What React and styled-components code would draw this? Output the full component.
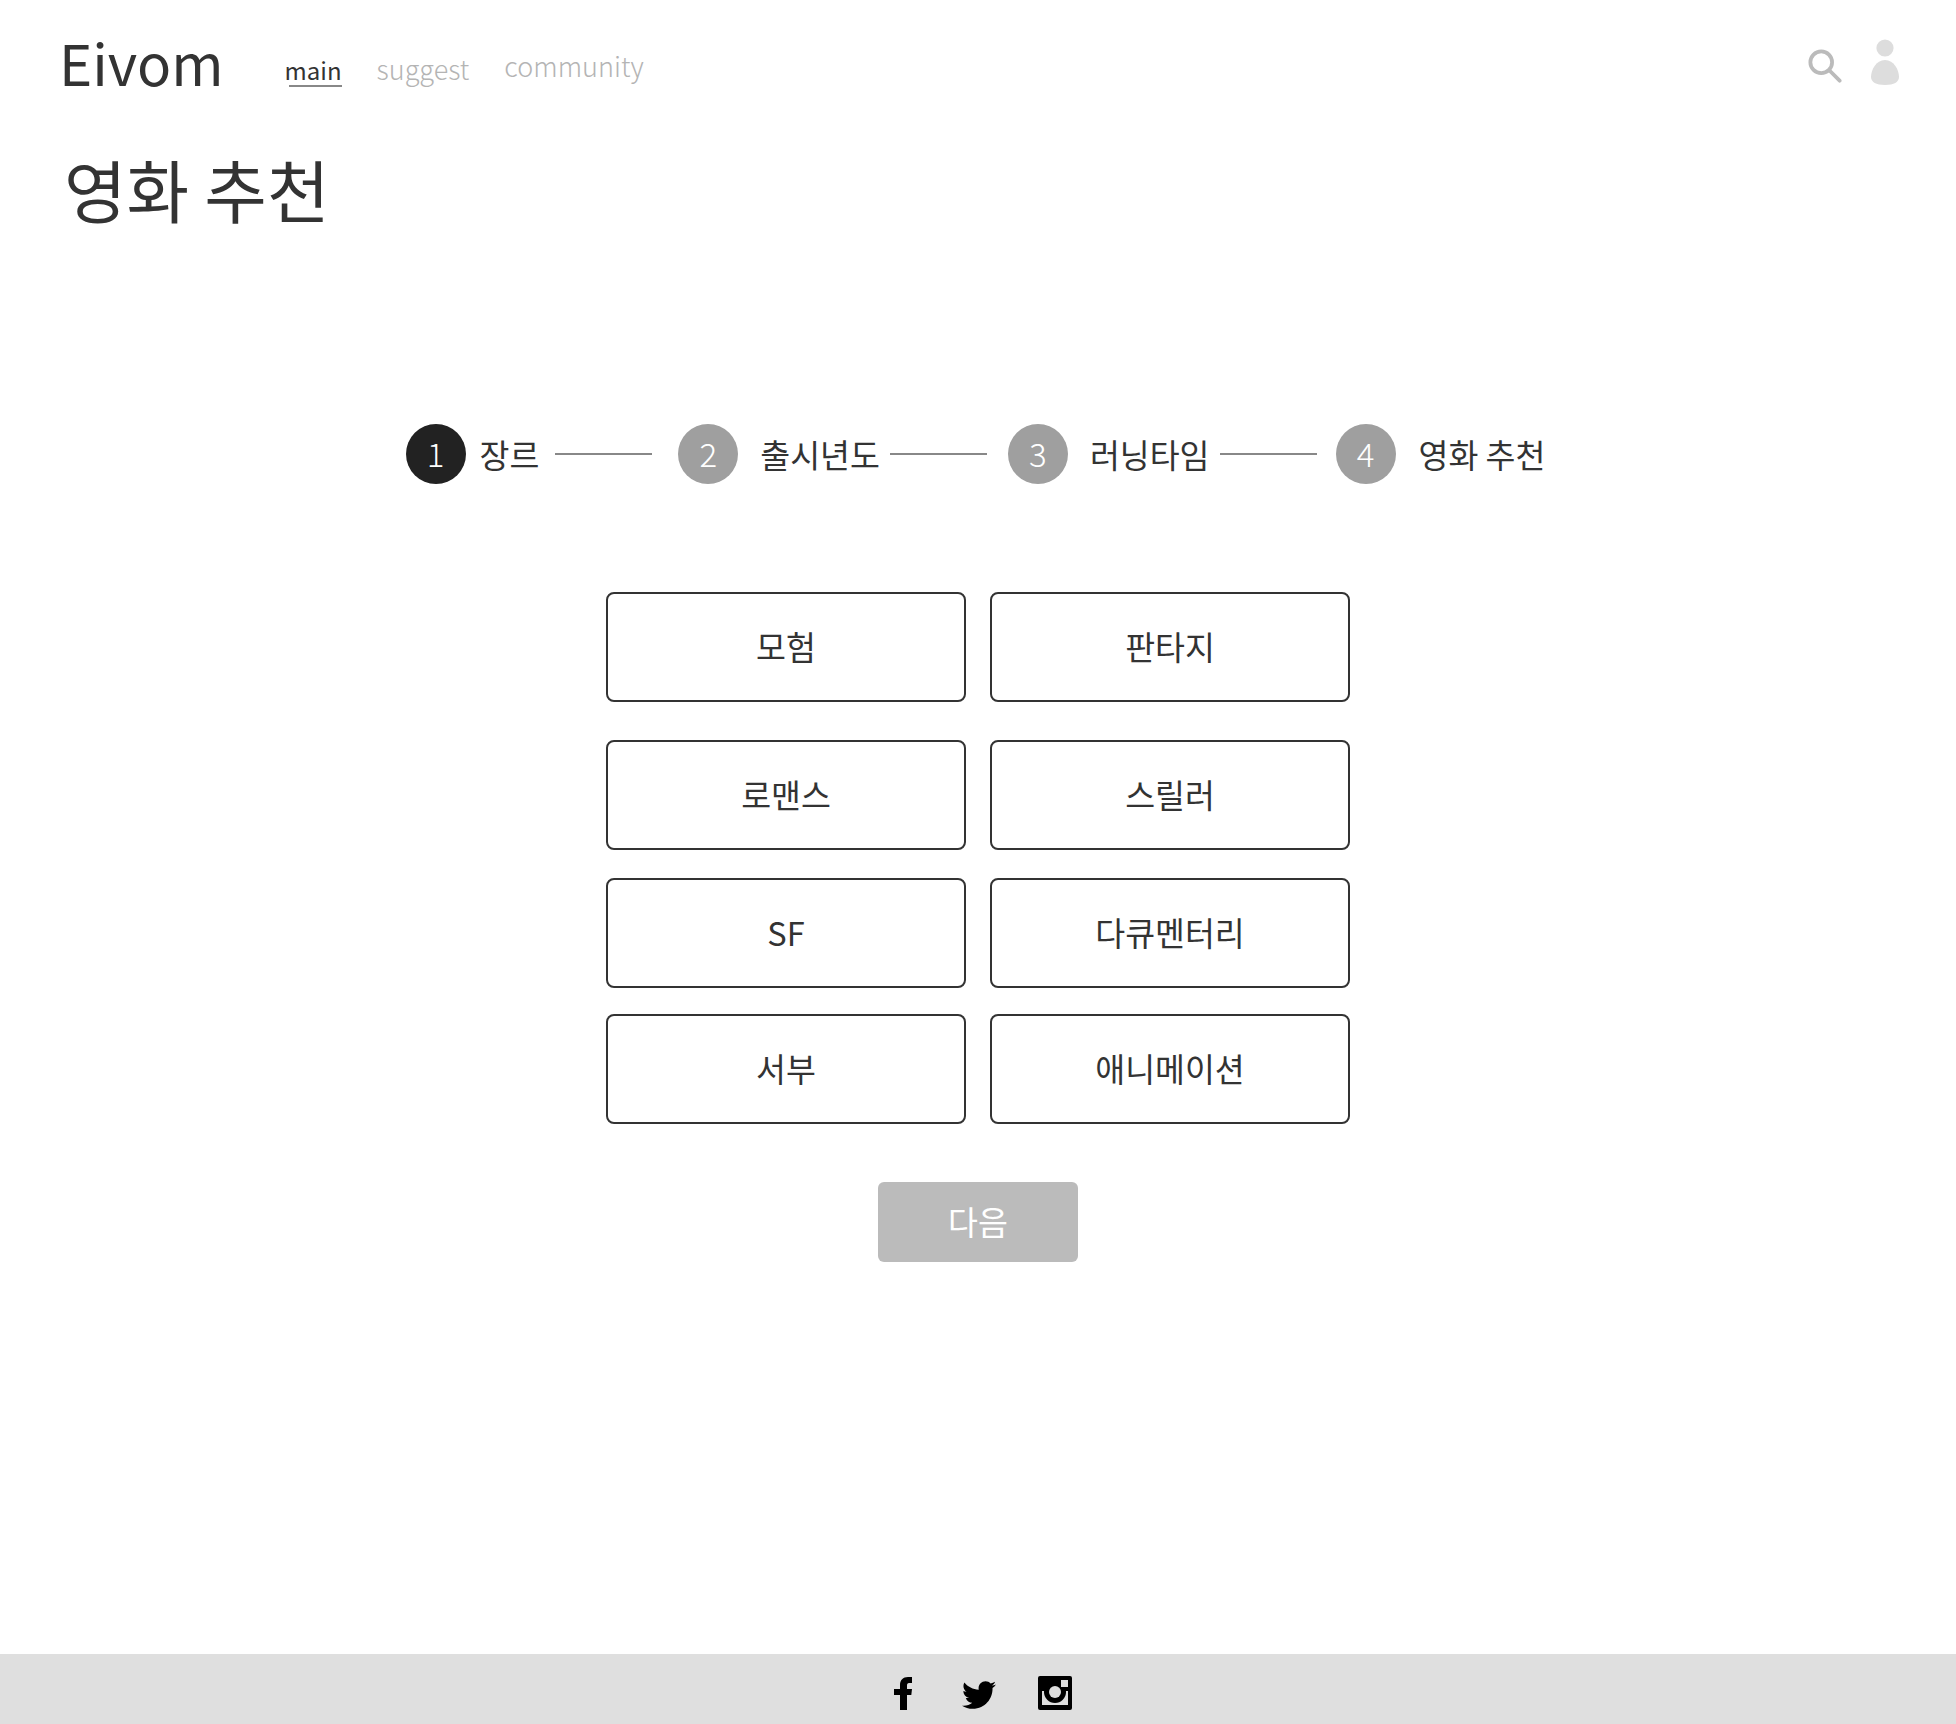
import React from "react";
import styled, { createGlobalStyle } from "styled-components";
import { FaTwitter } from "react-icons/fa";

const Global = createGlobalStyle`
  html, body { margin: 0; padding: 0; background: #fff; }
  body { font-family: "Noto Sans CJK KR", "Noto Sans", sans-serif; color: #333; font-weight: 400; }
`;

const Page = styled.div`
  width: 1956px;
  height: 1724px;
  display: flex;
  flex-direction: column;
`;
const Header = styled.header`
  height: 130px;
  padding: 0 55px 0 59px;
  display: flex;
  align-items: flex-start;
  box-sizing: border-box;
`;
const Logo = styled.div`
  font-size: 56.5px;
  line-height: 60px;
  margin-top: 31px;
  color: #333;
  font-weight: 400;
`;
const Nav = styled.nav`
  display: flex;
  margin-left: 61px;
  align-items: flex-start;
`;
const NavLink = styled.a`
  font-size: ${(p) => p.$size}px;
  font-weight: ${(p) => (p.$active ? 400 : 300)};
  line-height: 32px;
  display: block;
  margin-top: ${(p) => p.$top}px;
  margin-right: 35px;
  color: ${(p) => (p.$active ? "#333" : "#b4b4b4")};
  ${(p) => p.$active && `
    position: relative;
    &::after {
      content: "";
      position: absolute;
      left: 4px;
      right: 0;
      bottom: -1px;
      height: 2px;
      background: #888;
    }
  `}
`;
const Tools = styled.div`
  margin-left: auto;
  display: flex;
  align-items: flex-start;
  gap: 27px;
  padding-top: 39px;
`;
const Title = styled.h1`
  margin: 19px 0 0 64px;
  font-size: 68px;
  line-height: 80px;
  font-weight: 400;
  color: #333;
`;
const Main = styled.main`
  flex: 1;
  display: flex;
  flex-direction: column;
  align-items: center;
`;
const Steps = styled.ol`
  list-style: none;
  margin: 0;
  padding: 0;
  display: flex;
  align-items: center;
  height: 60px;
  width: 1150px;
  margin-top: 195px;
  margin-left: 5px;
`;
const Dot = styled.span`
  width: 60px;
  height: 60px;
  box-sizing: border-box;
  padding-bottom: 3px;
  border-radius: 50%;
  background: ${(p) => (p.$current ? "#222" : "#9f9f9f")};
  color: #fff;
  font-size: 33px;
  font-weight: 300;
  display: flex;
  align-items: center;
  justify-content: center;
  flex: none;
`;
const StepLabel = styled.span`
  font-size: 32.5px;
  line-height: 60px;
  color: #333;
  margin-left: ${(p) => p.$gap}px;
  white-space: nowrap;
  flex: none;
`;
const Rule = styled.span`
  height: 2px;
  width: 97px;
  background: #888;
  flex: none;
  margin-left: ${(p) => p.$before}px;
  margin-right: ${(p) => p.$after}px;
`;
const Genres = styled.div`
  margin-top: 108px;
  display: flex;
  flex-direction: column;
`;
const GenreRow = styled.div`
  display: flex;
  gap: 24px;
  margin-bottom: ${(p) => p.$below}px;
`;
const Genre = styled.button`
  width: 360px;
  height: 110px;
  box-sizing: border-box;
  border: 2px solid #333;
  border-radius: 8px;
  background: #fff;
  font-family: inherit;
  font-weight: 400;
  font-size: 32.5px;
  color: #333;
  padding: 0 0 3px;
`;
const Next = styled.button`
  margin-top: 58px;
  width: 200px;
  height: 80px;
  border: 0;
  border-radius: 6px;
  background: #bbb;
  color: #fff;
  font-family: inherit;
  font-weight: 400;
  font-size: 32.5px;
  padding: 0 0 4px;
`;
const Footer = styled.footer`
  height: 70px;
  box-sizing: border-box;
  padding: 8px 0 0 1px;
  background: #dfdfdf;
  display: flex;
  align-items: center;
  justify-content: center;
  color: #000;
`;
const Social = styled.a`
  display: flex;
  align-items: center;
  justify-content: center;
  width: 76px;
  color: #000;
  font-size: 34px;
  margin-top: ${(p) => p.$drop || 0}px;
`;

const SearchIcon = () => (
  <svg width="34" height="34" viewBox="0 0 36 36" fill="none" stroke="#bbb" strokeWidth="4" style={{ marginTop: 10 }}>
    <circle cx="14" cy="14" r="11.5" />
    <path d="M22.5 22.5 L33.5 33.5" strokeLinecap="round" />
  </svg>
);
const UserIcon = () => (
  <svg width="32" height="46" viewBox="0 0 32 46" fill="#ddd">
    <circle cx="16" cy="9" r="8.6" />
    <path d="M16 21 C7 21 2 31 2 38 C2 43 7 46 16 46 C25 46 30 43 30 38 C30 31 25 21 16 21 Z" />
  </svg>
);
const FacebookIcon = () => (
  <svg width="18" height="33" viewBox="0 0 18 33" fill="#000">
    <path d="M6 33 V18 H0 V12 H6 V8 C6 3 9 0 14 0 H18 V6 H15 C13.5 6 13 7 13 8.5 V12 H18 L17.3 18 H13 V33 Z" />
  </svg>
);
const InstagramIcon = () => (
  <svg width="34" height="34" viewBox="0 0 34 34">
    <rect width="34" height="34" rx="2" fill="#000" />
    <rect x="4" y="15" width="26" height="14" fill="#dfdfdf" />
    <circle cx="17" cy="16" r="11" fill="#000" />
    <circle cx="17" cy="16" r="6" fill="#dfdfdf" />
    <rect x="23" y="4" width="7" height="7" fill="#dfdfdf" />
  </svg>
);

const rows = [
  [["모험", "판타지"], 38],
  [["로맨스", "스릴러"], 28],
  [["SF", "다큐멘터리"], 26],
  [["서부", "애니메이션"], 0],
];

export default function App() {
  return (
    <Page>
      <Global />
      <Header>
        <Logo>Eivom</Logo>
        <Nav>
          <NavLink $active $top={54} $size={24}>main</NavLink>
          <NavLink $top={53} $size={27}>suggest</NavLink>
          <NavLink $top={50} $size={27}>community</NavLink>
        </Nav>
        <Tools>
          <SearchIcon />
          <UserIcon />
        </Tools>
      </Header>
      <Title>영화 추천</Title>
      <Main>
        <Steps>
          <Dot $current>1</Dot>
          <StepLabel $gap={14}>장르</StepLabel>
          <Rule $before={16} $after={26} />
          <Dot>2</Dot>
          <StepLabel $gap={22}>출시년도</StepLabel>
          <Rule $before={10} $after={21} />
          <Dot>3</Dot>
          <StepLabel $gap={22}>러닝타임</StepLabel>
          <Rule $before={10} $after={19} />
          <Dot>4</Dot>
          <StepLabel $gap={23}>영화 추천</StepLabel>
        </Steps>
        <Genres>
          {rows.map(([names, below]) => (
            <GenreRow key={names[0]} $below={below}>
              {names.map((n) => (
                <Genre key={n}>{n}</Genre>
              ))}
            </GenreRow>
          ))}
        </Genres>
        <Next>다음</Next>
      </Main>
      <Footer>
        <Social><FacebookIcon /></Social>
        <Social $drop={3}><FaTwitter /></Social>
        <Social><InstagramIcon /></Social>
      </Footer>
    </Page>
  );
}
